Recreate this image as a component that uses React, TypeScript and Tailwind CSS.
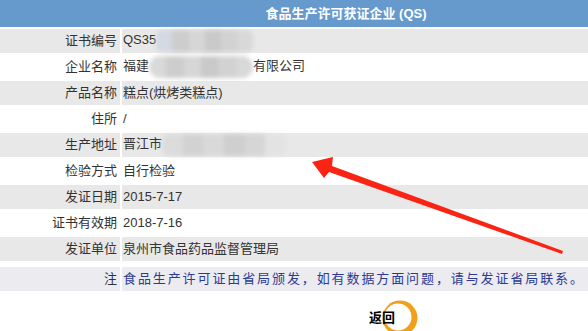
const rows: { label: string; value: React.ReactNode }[] = [
  {
    label: "证书编号",
    value: (
      <>
        QS35
        <Smudge w={97} tint />
      </>
    ),
  },
  {
    label: "企业名称",
    value: (
      <>
        福建
        <Smudge w={104} round />
        有限公司
      </>
    ),
  },
  { label: "产品名称", value: "糕点(烘烤类糕点)" },
  { label: "住所", value: "/" },
  {
    label: "生产地址",
    value: (
      <>
        晋江市
        <Smudge w={124} fade />
      </>
    ),
  },
  { label: "检验方式", value: "自行检验" },
  { label: "发证日期", value: "2015-7-17" },
  { label: "证书有效期", value: "2018-7-16" },
  { label: "发证单位", value: "泉州市食品药品监督管理局" },
];

// blurred-out patch over private info
function Smudge({ w, round = false, tint = false, fade = false }: { w: number; round?: boolean; tint?: boolean; fade?: boolean }) {
  return (
    <span
      className={`inline-flex h-[22px] align-middle overflow-hidden blur-[2px] ${round ? "rounded-full" : "rounded-[6px]"} ${fade ? "opacity-80" : ""}`}
      style={{ width: w }}
    >
      <span className={`flex-1 ${tint ? "bg-[#d3d9e2]" : "bg-[#d9d9d9]"}`} />
      <span className="flex-1 bg-[#cdcdcd]" />
      <span className="flex-1 bg-[#d6d6d6]" />
      <span className="flex-1 bg-[#c9c9c9]" />
      <span className="flex-1 bg-[#d2d2d2]" />
      <span className={`flex-1 ${fade ? "bg-[#e2e2e2]" : "bg-[#d8d8d8]"}`} />
    </span>
  );
}

export default function App() {
  return (
    <div
      className="relative w-[588px] h-[331px] overflow-hidden bg-white text-[13px] text-[#333]"
      style={{ fontFamily: '"Liberation Sans", "Noto Sans CJK SC", sans-serif' }}
    >
      <div className="flex flex-col gap-[2px]">
        {/* header */}
        <div className="h-[27px] bg-[#6699cc] flex items-center justify-center pl-[104px] text-white font-bold">
          食品生产许可获证企业 (QS)
        </div>

        {rows.map((r, i) => (
          <div key={r.label} className={`flex gap-[2px] h-[24px] ${i % 2 === 0 ? "bg-[#e8e8e8]" : "bg-white"}`}>
            <div className="w-[120px] shrink-0 flex items-center justify-end pr-[3px]">{r.label}</div>
            <div className="flex-1 flex items-center pl-[1px] bg-inherit border-l-2 border-white -ml-[2px]">
              <span className="whitespace-nowrap">{r.value}</span>
            </div>
          </div>
        ))}
      </div>

      {/* note */}
      <div className="mt-[6px] flex h-[24px] bg-[#ebebf0]">
        <div className="w-[120px] shrink-0 flex items-center justify-end pr-[3px]">注</div>
        <div className="flex-1 flex items-center pl-[1px] border-l-2 border-white text-[#2c3a94] whitespace-nowrap">
          <span className="tracking-[1.9px]">食品生产许可证由省局颁发，如有数据方面问题，请与发证省局联系</span>
          <span>。</span>
        </div>
      </div>

      {/* back button */}
      <div className="mt-[9px] pl-[369px]">
        <div className="relative inline-flex h-[36px] w-[60px]">
          <svg className="absolute left-[13px] top-0" width="36" height="36" viewBox="0 0 36 36">
            <circle cx="18" cy="18" r="17.5" fill="#f0a01a" />
            <circle cx="16" cy="17" r="13.5" fill="#fff" />
          </svg>
          <span className="relative mt-[8px] font-bold text-black text-[13px]">返回</span>
        </div>
      </div>

      {/* red annotation arrow */}
      <svg className="absolute left-0 top-0 pointer-events-none" width="588" height="331" viewBox="0 0 588 331">
        <polygon
          points="312,162 333,157 332,166 563,251 562,254 329,172 324,178"
          fill="#fb2414"
        />
      </svg>
    </div>
  );
}
